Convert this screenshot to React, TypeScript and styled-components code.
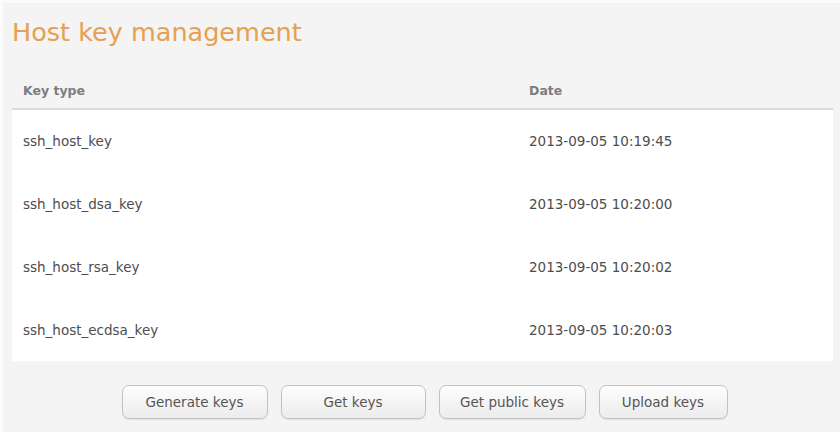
import React from "react";
import styled, { createGlobalStyle } from "styled-components";

const GlobalStyle = createGlobalStyle`
  html, body {
    margin: 0;
    padding: 0;
    background: #f4f4f4;
  }
  body {
    font-family: "DejaVu Sans", Verdana, sans-serif;
  }
`;

const Page = styled.div`
  width: 840px;
  height: 432px;
  box-sizing: border-box;
  border-top: 3px solid #fbfbfb;
  border-left: 3px solid #fbfbfb;
  padding: 13px 7px 0 9px;
  background: #f4f4f4;
`;

const Title = styled.h1`
  margin: 0;
  font-size: 25.5px;
  font-weight: normal;
  color: #e6a050;
  line-height: 32px;
`;

const Table = styled.div`
  margin-top: 24px;
`;

const Row = styled.div<{ $head?: boolean }>`
  display: grid;
  grid-template-columns: 506px 1fr;
  align-items: center;
  height: ${(p) => (p.$head ? "36px" : "62.75px")};
  padding-left: 11px;
  font-size: ${(p) => (p.$head ? "12.5px" : "13.5px")};
  color: ${(p) => (p.$head ? "#7d7d7d" : "#4d4d4d")};
  font-weight: ${(p) => (p.$head ? "bold" : "normal")};
  border-bottom: ${(p) => (p.$head ? "2px solid #dcdcdc" : "none")};
`;

const Body = styled.div`
  background: #fff;
`;

const Actions = styled.div`
  display: flex;
  justify-content: center;
  gap: 13px;
  padding: 24px 0 0 4px;
`;

const Button = styled.button<{ $w: number }>`
  width: ${(p) => p.$w}px;
  height: 34px;
  border: 1px solid #c2c2c2;
  border-radius: 7px;
  background: linear-gradient(#fdfdfd, #ececec);
  box-shadow: 0 1px 1px rgba(0, 0, 0, 0.08);
  font-family: "DejaVu Sans", Verdana, sans-serif;
  font-size: 13.5px;
  color: #555;
  padding: 0;
`;

const keys = [
  ["ssh_host_key", "2013-09-05 10:19:45"],
  ["ssh_host_dsa_key", "2013-09-05 10:20:00"],
  ["ssh_host_rsa_key", "2013-09-05 10:20:02"],
  ["ssh_host_ecdsa_key", "2013-09-05 10:20:03"],
];

const buttons: [string, number][] = [
  ["Generate keys", 146],
  ["Get keys", 145],
  ["Get public keys", 147],
  ["Upload keys", 129],
];

export default function App() {
  return (
    <>
      <GlobalStyle />
      <Page>
        <Title>Host key management</Title>
        <Table>
          <Row $head>
            <span>Key type</span>
            <span>Date</span>
          </Row>
          <Body>
            {keys.map(([name, date]) => (
              <Row key={name}>
                <span>{name}</span>
                <span>{date}</span>
              </Row>
            ))}
          </Body>
        </Table>
        <Actions>
          {buttons.map(([label, w]) => (
            <Button key={label} $w={w}>
              {label}
            </Button>
          ))}
        </Actions>
      </Page>
    </>
  );
}
